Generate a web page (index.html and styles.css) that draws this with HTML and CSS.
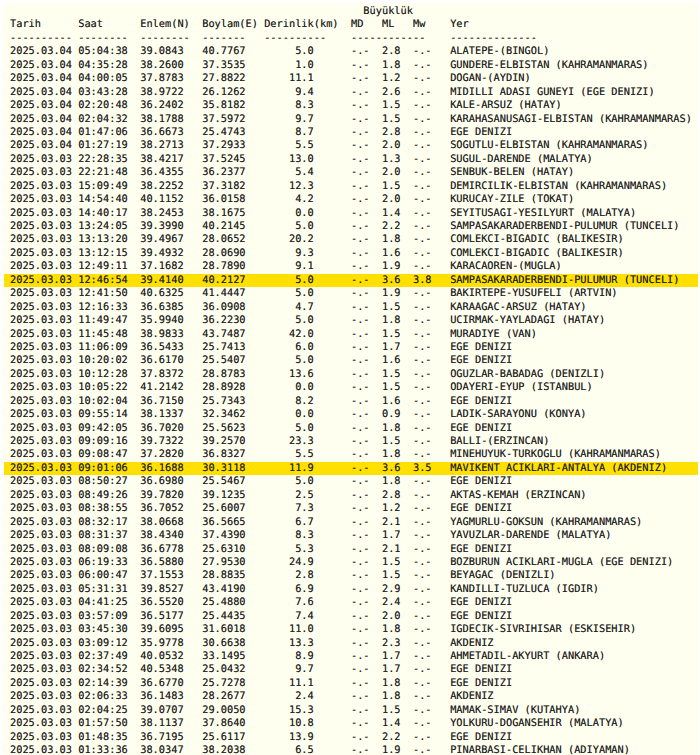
FILE: index.html
```html
<!DOCTYPE html>
<html lang="tr">
<head>
<meta charset="utf-8">
<title>Son Depremler</title>
<link rel="stylesheet" href="styles.css">
</head>
<body>
<pre class="listing">                                                         Büyüklük
Tarih      Saat      Enlem(N)  Boylam(E) Derinlik(km)  MD   ML   Mw    Yer
---------- --------  --------  -------   ----------    ------------    --------------
2025.03.04 05:04:38  39.0843   40.7767        5.0      -.-  2.8  -.-   ALATEPE-(BINGOL)
2025.03.04 04:35:28  38.2600   37.3535        1.0      -.-  1.8  -.-   GUNDERE-ELBISTAN (KAHRAMANMARAS)
2025.03.04 04:00:05  37.8783   27.8822       11.1      -.-  1.2  -.-   DOGAN-(AYDIN)
2025.03.04 03:43:28  38.9722   26.1262        9.4      -.-  2.6  -.-   MIDILLI ADASI GUNEYI (EGE DENIZI)
2025.03.04 02:20:48  36.2402   35.8182        8.3      -.-  1.5  -.-   KALE-ARSUZ (HATAY)
2025.03.04 02:04:32  38.1788   37.5972        9.7      -.-  1.5  -.-   KARAHASANUSAGI-ELBISTAN (KAHRAMANMARAS)
2025.03.04 01:47:06  36.6673   25.4743        8.7      -.-  2.8  -.-   EGE DENIZI
2025.03.04 01:27:19  38.2713   37.2933        5.5      -.-  2.0  -.-   SOGUTLU-ELBISTAN (KAHRAMANMARAS)
2025.03.03 22:28:35  38.4217   37.5245       13.0      -.-  1.3  -.-   SUGUL-DARENDE (MALATYA)
2025.03.03 22:21:48  36.4355   36.2377        5.4      -.-  2.0  -.-   SENBUK-BELEN (HATAY)
2025.03.03 15:09:49  38.2252   37.3182       12.3      -.-  1.5  -.-   DEMIRCILIK-ELBISTAN (KAHRAMANMARAS)
2025.03.03 14:54:40  40.1152   36.0158        4.2      -.-  2.0  -.-   KURUCAY-ZILE (TOKAT)
2025.03.03 14:40:17  38.2453   38.1675        0.0      -.-  1.4  -.-   SEYITUSAGI-YESILYURT (MALATYA)
2025.03.03 13:24:05  39.3990   40.2145        5.0      -.-  2.2  -.-   SAMPASAKARADERBENDI-PULUMUR (TUNCELI)
2025.03.03 13:13:20  39.4967   28.0652       20.2      -.-  1.8  -.-   COMLEKCI-BIGADIC (BALIKESIR)
2025.03.03 13:12:15  39.4932   28.0690        9.3      -.-  1.6  -.-   COMLEKCI-BIGADIC (BALIKESIR)
2025.03.03 12:49:11  37.1682   28.7890        9.1      -.-  1.9  -.-   KARACAOREN-(MUGLA)
<span class="hit">2025.03.03 12:46:54  39.4140   40.2127        5.0      -.-  3.6  3.8   SAMPASAKARADERBENDI-PULUMUR (TUNCELI)</span>2025.03.03 12:41:50  40.6325   41.4447        5.0      -.-  1.9  -.-   BAKIRTEPE-YUSUFELI (ARTVIN)
2025.03.03 12:16:33  36.6385   36.0908        4.7      -.-  1.5  -.-   KARAAGAC-ARSUZ (HATAY)
2025.03.03 11:49:47  35.9940   36.2230        5.0      -.-  1.8  -.-   UCIRMAK-YAYLADAGI (HATAY)
2025.03.03 11:45:48  38.9833   43.7487       42.0      -.-  1.5  -.-   MURADIYE (VAN)
2025.03.03 11:06:09  36.5433   25.7413        6.0      -.-  1.7  -.-   EGE DENIZI
2025.03.03 10:20:02  36.6170   25.5407        5.0      -.-  1.6  -.-   EGE DENIZI
2025.03.03 10:12:28  37.8372   28.8783       13.6      -.-  1.5  -.-   OGUZLAR-BABADAG (DENIZLI)
2025.03.03 10:05:22  41.2142   28.8928        0.0      -.-  1.5  -.-   ODAYERI-EYUP (ISTANBUL)
2025.03.03 10:02:04  36.7150   25.7343        8.2      -.-  1.6  -.-   EGE DENIZI
2025.03.03 09:55:14  38.1337   32.3462        0.0      -.-  0.9  -.-   LADIK-SARAYONU (KONYA)
2025.03.03 09:42:05  36.7020   25.5623        5.0      -.-  1.8  -.-   EGE DENIZI
2025.03.03 09:09:16  39.7322   39.2570       23.3      -.-  1.5  -.-   BALLI-(ERZINCAN)
2025.03.03 09:08:47  37.2820   36.8327        5.5      -.-  1.8  -.-   MINEHUYUK-TURKOGLU (KAHRAMANMARAS)
<span class="hit">2025.03.03 09:01:06  36.1688   30.3118       11.9      -.-  3.6  3.5   MAVIKENT ACIKLARI-ANTALYA (AKDENIZ)</span>2025.03.03 08:50:27  36.6980   25.5467        5.0      -.-  1.8  -.-   EGE DENIZI
2025.03.03 08:49:26  39.7820   39.1235        2.5      -.-  2.8  -.-   AKTAS-KEMAH (ERZINCAN)
2025.03.03 08:38:55  36.7052   25.6007        7.3      -.-  1.2  -.-   EGE DENIZI
2025.03.03 08:32:17  38.0668   36.5665        6.7      -.-  2.1  -.-   YAGMURLU-GOKSUN (KAHRAMANMARAS)
2025.03.03 08:31:37  38.4340   37.4390        8.3      -.-  1.7  -.-   YAVUZLAR-DARENDE (MALATYA)
2025.03.03 08:09:08  36.6778   25.6310        5.3      -.-  2.1  -.-   EGE DENIZI
2025.03.03 06:19:33  36.5880   27.9530       24.9      -.-  1.5  -.-   BOZBURUN ACIKLARI-MUGLA (EGE DENIZI)
2025.03.03 06:00:47  37.1553   28.8835        2.8      -.-  1.5  -.-   BEYAGAC (DENIZLI)
2025.03.03 05:31:31  39.8527   43.4190        6.9      -.-  2.9  -.-   KANDILLI-TUZLUCA (IGDIR)
2025.03.03 04:41:25  36.5520   25.4880        7.6      -.-  2.4  -.-   EGE DENIZI
2025.03.03 03:57:09  36.5177   25.4435        7.4      -.-  2.0  -.-   EGE DENIZI
2025.03.03 03:45:30  39.6095   31.6018       11.0      -.-  1.8  -.-   IGDECIK-SIVRIHISAR (ESKISEHIR)
2025.03.03 03:09:12  35.9778   30.6638       13.3      -.-  2.3  -.-   AKDENIZ
2025.03.03 02:37:49  40.0532   33.1495        8.9      -.-  1.7  -.-   AHMETADIL-AKYURT (ANKARA)
2025.03.03 02:34:52  40.5348   25.0432        9.7      -.-  1.7  -.-   EGE DENIZI
2025.03.03 02:14:39  36.6770   25.7278       11.1      -.-  1.8  -.-   EGE DENIZI
2025.03.03 02:06:33  36.1483   28.2677        2.4      -.-  1.8  -.-   AKDENIZ
2025.03.03 02:04:25  39.0707   29.0050       15.3      -.-  1.5  -.-   MAMAK-SIMAV (KUTAHYA)
2025.03.03 01:57:50  38.1137   37.8640       10.8      -.-  1.4  -.-   YOLKURU-DOGANSEHIR (MALATYA)
2025.03.03 01:48:35  36.7195   25.6117       13.9      -.-  2.2  -.-   EGE DENIZI
2025.03.03 01:33:36  38.0347   38.2038        6.5      -.-  1.9  -.-   PINARBASI-CELIKHAN (ADIYAMAN)
</pre>
</body>
</html>
```
FILE: styles.css
```css
html, body {
  margin: 0;
  padding: 0;
  background: #ffffff;
}
body {
  height: 755px;
  overflow: hidden;
}
.listing {
  margin: 3px 2px 0 3px;
  padding: 2px 0 0 7px;
  background: #fffff0;
  color: #222222;
  font-family: "DejaVu Sans Mono", monospace;
  font-size: 10.3px;
  line-height: 13.43px;
  white-space: pre;
  overflow: hidden;
  text-rendering: geometricPrecision;
  text-shadow: 0 0 0.5px rgba(34, 34, 34, 0.6);
}
.hit {
  display: block;
  margin-left: -6px;
  padding-left: 6px;
  background: #ffe000;
}
```
